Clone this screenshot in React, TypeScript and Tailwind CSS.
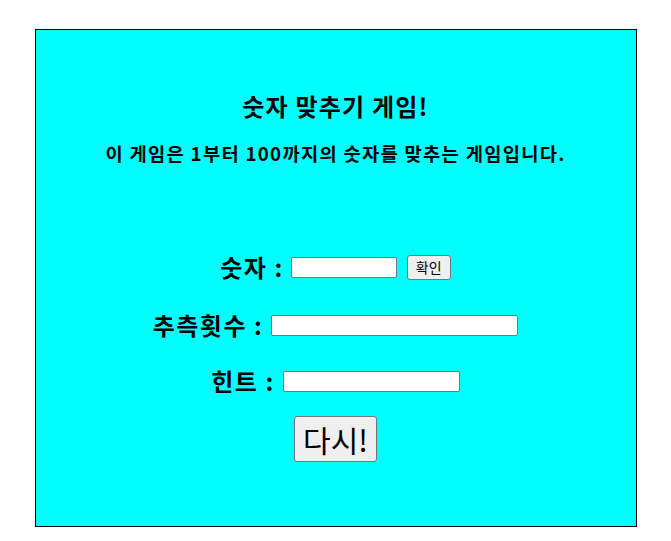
import { useState } from "react";

const FONT = "font-['Malgun_Gothic','Noto_Sans_CJK_KR','Liberation_Sans',sans-serif]";

export default function App() {
  const [guess, setGuess] = useState("");

  return (
    <div className={`min-h-[541px] bg-white pt-[29px] ${FONT}`}>
      <div className="mx-auto flex w-[602px] flex-col items-center border border-black bg-[#00ffff] pt-[60px] pb-[64px] text-black">
        <h2 className="h-[32px] text-[24px] leading-[32px] font-bold tracking-[1.2px]">숫자 맞추기 게임!</h2>
        <h3 className="mt-[19px] h-[24px] text-[18.72px] leading-[24px] font-bold tracking-[1.3px]">
          이 게임은 1부터 100까지의 숫자를 맞추는 게임입니다.
        </h3>

        {/* 숫자 입력 */}
        <div className="mt-[86px] flex h-[32px] items-center">
          <span className="text-[24px] leading-[32px] font-bold tracking-[1.5px]">숫자 :</span>
          <input
            type="text"
            value={guess}
            onChange={(e) => setGuess(e.target.value)}
            className="ml-[7px] h-[21px] w-[106px] rounded-[2px] border border-[#767676] bg-white px-1 text-[13px] outline-none"
          />
          <button className="ml-[10px] h-[25px] w-[44px] rounded-[3px] border border-[#767676] bg-[#efefef] text-[14px] leading-none">
            확인
          </button>
        </div>

        <div className="mt-[26px] flex h-[32px] items-center">
          <span className="text-[24px] leading-[32px] font-bold tracking-[1.5px]">추측횟수 :</span>
          <input
            type="text"
            readOnly
            className="ml-[8px] h-[21px] w-[247px] rounded-[2px] border border-[#767676] bg-white px-1 text-[13px] outline-none"
          />
        </div>

        <div className="mt-[24px] flex h-[32px] items-center">
          <span className="text-[24px] leading-[32px] font-bold tracking-[1.5px]">힌트 :</span>
          <input
            type="text"
            readOnly
            className="ml-[8px] h-[21px] w-[177px] rounded-[2px] border border-[#767676] bg-white px-1 text-[13px] outline-none"
          />
        </div>

        <button className="mt-[19px] h-[46px] w-[83px] rounded-[3px] border border-[#767676] bg-[#efefef] text-[30px] leading-none">
          다시!
        </button>
      </div>
    </div>
  );
}
